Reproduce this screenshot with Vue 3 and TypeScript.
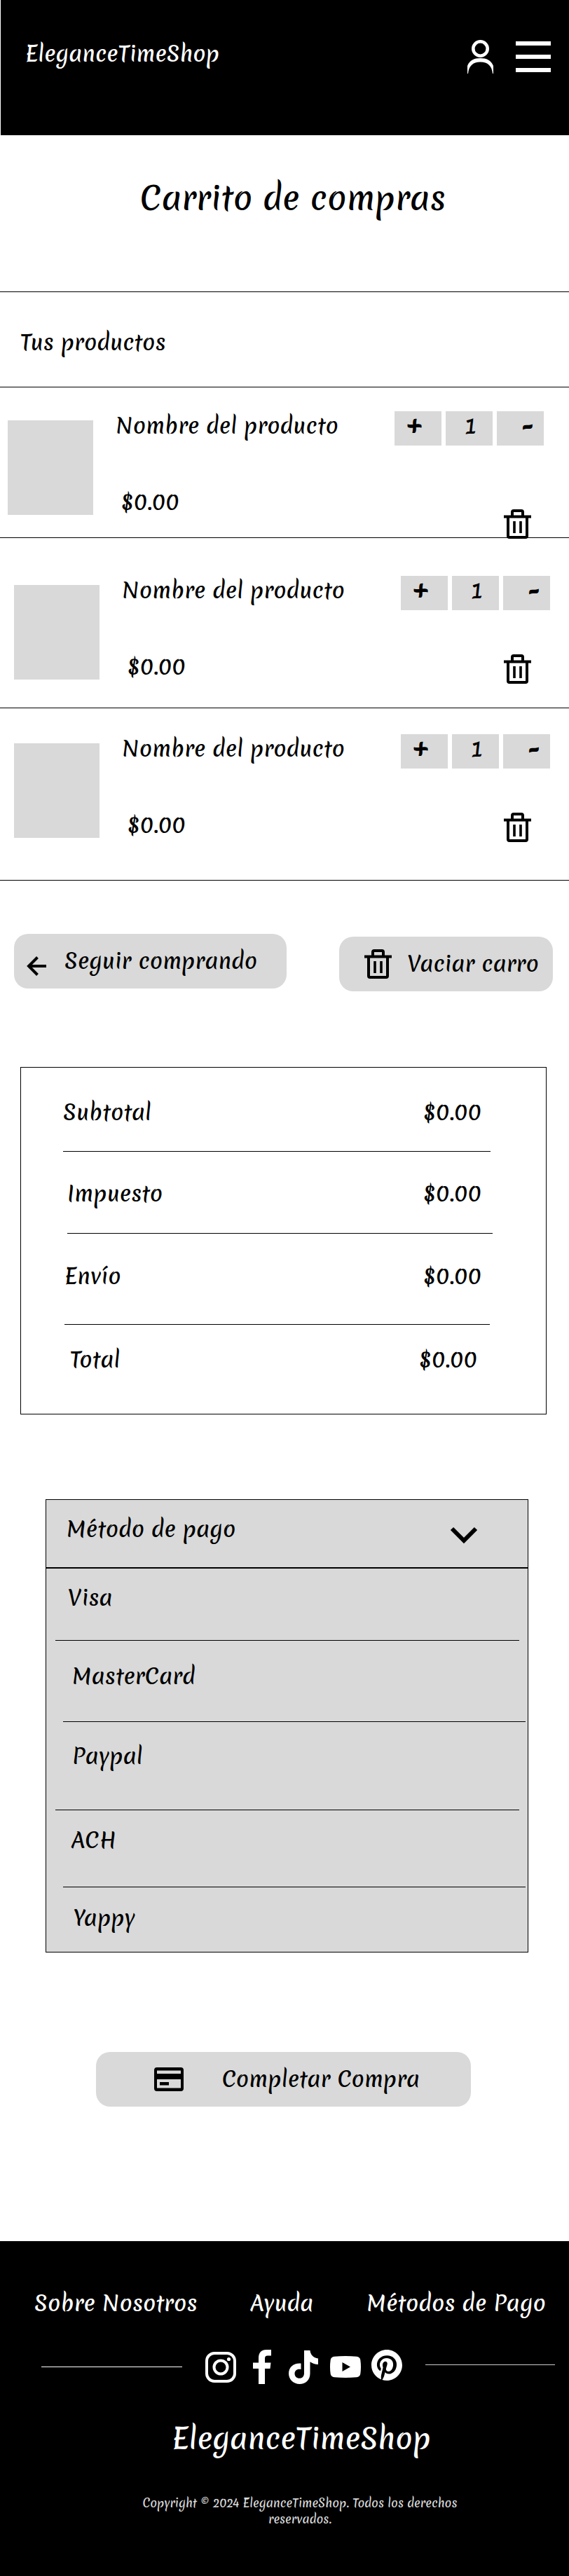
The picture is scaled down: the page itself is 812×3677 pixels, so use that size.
<script setup lang="ts">
import { ref } from 'vue'

interface Product {
  id: number
  name: string
  price: string
  quantity: number
}

interface Amount {
  key: string
  label: string
  value: string
}

const products = ref<Product[]>([
  { id: 1, name: 'Nombre del producto', price: '$0.00', quantity: 1 },
  { id: 2, name: 'Nombre del producto', price: '$0.00', quantity: 1 },
  { id: 3, name: 'Nombre del producto', price: '$0.00', quantity: 1 },
])

const amounts: Amount[] = [
  { key: 'subtotal', label: 'Subtotal', value: '$0.00' },
  { key: 'tax', label: 'Impuesto', value: '$0.00' },
  { key: 'shipping', label: 'Envío', value: '$0.00' },
  { key: 'total', label: 'Total', value: '$0.00' },
]

const methods: string[] = ['Visa', 'MasterCard', 'Paypal', 'ACH', 'Yappy']
const methodsOpen = ref(true)
const selectedMethod = ref('')

function changeQuantity(product: Product, step: number) {
  product.quantity = Math.max(1, product.quantity + step)
}

function removeProduct(id: number) {
  products.value = products.value.filter((p) => p.id !== id)
}

function emptyCart() {
  products.value = []
}
</script>

<template>
  <div class="page">
    <header class="top">
      <a class="brand" href="#">EleganceTimeShop</a>
      <nav class="top-actions" aria-label="Principal">
        <a href="#" aria-label="Mi cuenta">
          <svg width="37" height="48" viewBox="0 0 37 48">
            <circle cx="18.5" cy="12.5" r="10.2" fill="none" stroke="#fff" stroke-width="4.6" />
            <path fill="#fff" d="M0 48V37C3 29 10 26 18.500 26S34 29 37 37V48H36C35 37 29 31.500 18.500 31.500S2 37 1 48Z" />
          </svg>
        </a>
        <button type="button" aria-label="Menú">
          <svg width="50" height="45" viewBox="0 0 50 45" fill="#fff">
            <rect width="50" height="6" />
            <rect y="19" width="50" height="6" />
            <rect y="38" width="50" height="6" />
          </svg>
        </button>
      </nav>
    </header>

    <main>
      <h1>Carrito de compras</h1>

      <section class="cart">
        <h2>Tus productos</h2>
        <ul class="products">
          <li v-for="product in products" :key="product.id" class="product">
            <div class="thumb"></div>
            <div class="info">
              <p>{{ product.name }}</p>
              <p class="price">{{ product.price }}</p>
            </div>
            <div class="side">
              <div class="stepper">
                <button type="button" class="plus" aria-label="Añadir uno" @click="changeQuantity(product, 1)">+</button>
                <output>{{ product.quantity }}</output>
                <button type="button" class="minus" aria-label="Quitar uno" @click="changeQuantity(product, -1)">-</button>
              </div>
              <button type="button" class="remove" aria-label="Eliminar producto" @click="removeProduct(product.id)">
                <svg width="39" height="42" viewBox="0 0 39 42" fill="none" stroke="#000" stroke-width="4">
                  <path d="M12 10V4Q12 2 14 2H25Q27 2 27 4V10M0 10.500H39M6 11V38Q6 40 8 40H31Q33 40 33 38V11" />
                  <path d="M15 17V34M24 17V34" stroke-width="3.600" />
                </svg>
              </button>
            </div>
          </li>
        </ul>
      </section>

      <div class="cart-actions">
        <a class="pill back" href="#">
          <svg width="28" height="28" viewBox="0 0 28 28" fill="none" stroke="#000" stroke-width="4">
            <path d="M28 14H3M15.500 1.500L3 14L15.500 26.500" />
          </svg>
          <span>Seguir comprando</span>
        </a>
        <button type="button" class="pill clear" @click="emptyCart">
          <svg width="39" height="42" viewBox="0 0 39 42" fill="none" stroke="#000" stroke-width="4">
            <path d="M12 10V4Q12 2 14 2H25Q27 2 27 4V10M0 10.500H39M6 11V38Q6 40 8 40H31Q33 40 33 38V11" />
            <path d="M15 17V34M24 17V34" stroke-width="3.600" />
          </svg>
          <span>Vaciar carro</span>
        </button>
      </div>

      <dl class="summary">
        <div v-for="amount in amounts" :key="amount.key" class="amount" :class="amount.key">
          <dt>{{ amount.label }}</dt>
          <dd>{{ amount.value }}</dd>
        </div>
      </dl>

      <section class="payment">
        <button
          type="button"
          class="payment-head"
          aria-controls="payment-methods"
          :aria-expanded="methodsOpen"
          @click="methodsOpen = !methodsOpen"
        >
          <span>Método de pago</span>
          <svg width="40" height="26" viewBox="0 0 40 26" fill="none" stroke="#000" stroke-width="6">
            <path d="M3 3L20 20L37 3" />
          </svg>
        </button>
        <ul v-show="methodsOpen" id="payment-methods" class="methods">
          <li v-for="method in methods" :key="method" :class="method.toLowerCase()">
            <button type="button" :aria-pressed="selectedMethod === method" @click="selectedMethod = method">
              {{ method }}
            </button>
          </li>
        </ul>
      </section>

      <div class="checkout">
        <button type="button" class="pill pay">
          <svg width="42" height="34" viewBox="0 0 42 34">
            <path
              fill="#000"
              fill-rule="evenodd"
              d="M4 0H38Q42 0 42 4V30Q42 34 38 34H4Q0 34 0 30V4Q0 0 4 0ZM4 4.500V9H38V4.500ZM4 17V29.500H38V17ZM8 21H21V25.500H8Z"
            />
          </svg>
          <span>Completar Compra</span>
        </button>
      </div>
    </main>

    <footer class="bottom">
      <nav class="links" aria-label="Pie de página">
        <a href="#">Sobre Nosotros</a>
        <a href="#">Ayuda</a>
        <a href="#">Métodos de Pago</a>
      </nav>

      <div class="social">
        <span class="rule rule-left"></span>
        <a href="#" aria-label="Instagram">
          <svg width="44" height="44" viewBox="0 0 44 44" fill="none" stroke="#fff" stroke-width="4">
            <rect x="2" y="2" width="40" height="40" rx="11" />
            <circle cx="22" cy="22" r="9.500" />
            <circle cx="33.500" cy="10.500" r="2.600" fill="#fff" stroke="none" />
          </svg>
        </a>
        <a class="facebook" href="#" aria-label="Facebook">
          <svg width="26" height="49" viewBox="0 0 26 49" fill="#fff">
            <path d="M8 49V27H0V18.500H8V12C8 4 12 0 19 0H26V8.500H21C18 8.500 17 10 17 12.500V18.500H25.500L24.500 27H17V49Z" />
          </svg>
        </a>
        <a class="tiktok" href="#" aria-label="TikTok">
          <svg width="42" height="48" viewBox="0 0 42 48" fill="#fff">
            <path d="M22 0H30.500C31 6 35.500 11 42 11.500V20C37.500 20 34 18.500 30.500 16.200V33C30.500 42 24 48 15.500 48S0 41.500 0 33C0 23.500 7.500 17.500 17.500 18.500V27C12.500 25.800 8.500 28.500 8.500 33C8.500 37 11.500 39.800 15.300 39.800C19.500 39.800 22 37 22 32.500Z" />
          </svg>
        </a>
        <a class="youtube" href="#" aria-label="YouTube">
          <svg width="44" height="31" viewBox="0 0 44 31">
            <path fill="#fff" fill-rule="evenodd" d="M6 .8Q22-.8 38 .8Q42.500 1.200 43.300 5.500Q44.700 15.500 43.300 25.500Q42.500 29.800 38 30.200Q22 31.800 6 30.200Q1.500 29.800.7 25.500Q-.7 15.500.7 5.500Q1.500 1.200 6 .8ZM17.500 9V22L29 15.500Z" />
          </svg>
        </a>
        <a class="pinterest" href="#" aria-label="Pinterest">
          <svg width="44" height="44" viewBox="0 0 24 24" fill="#fff">
            <path d="M12 0C5.370 0 0 5.370 0 12c0 5.080 3.160 9.420 7.620 11.170-.1-.95-.2-2.400.04-3.440l1.410-5.970s-.36-.72-.36-1.780c0-1.670.97-2.910 2.170-2.910 1.020 0 1.520.77 1.520 1.690 0 1.030-.66 2.570-1 4-.28 1.190.6 2.170 1.780 2.170 2.130 0 3.770-2.250 3.770-5.500 0-2.870-2.060-4.880-5.010-4.880-3.410 0-5.420 2.560-5.420 5.210 0 1.030.4 2.140.9 2.740.1.120.11.230.08.350l-.33 1.360c-.05.220-.18.270-.41.160-1.500-.7-2.430-2.890-2.430-4.650 0-3.780 2.750-7.260 7.930-7.260 4.160 0 7.400 2.970 7.400 6.930 0 4.140-2.610 7.460-6.230 7.460-1.220 0-2.360-.63-2.750-1.380l-.75 2.850c-.27 1.040-1 2.350-1.490 3.150 1.120.34 2.310.53 3.550.53 6.630 0 12-5.370 12-12S18.630 0 12 0z" />
          </svg>
        </a>
        <span class="rule rule-right"></span>
      </div>

      <p class="footer-brand">EleganceTimeShop</p>
      <p class="copyright">Copyright © 2024 EleganceTimeShop. Todos los derechos reservados.</p>
    </footer>
  </div>
</template>

<style>
body {
  margin: 0;
  background: #fff;
}
</style>

<style scoped>
.page {
  color: #000;
  font-family: Merienda, 'Open Sans', 'Noto Sans', sans-serif;
  font-size: 30px;
  font-weight: 500;
  line-height: 40px;
}

h1,
h2,
p,
ul,
dl,
dd {
  margin: 0;
  padding: 0;
  font-weight: inherit;
}

ul {
  list-style: none;
}

a {
  color: inherit;
  text-decoration: none;
}

button {
  margin: 0;
  padding: 0;
  border: 0;
  background: none;
  color: inherit;
  font: inherit;
  text-align: left;
  cursor: pointer;
}

svg {
  display: block;
  flex: none;
}

.top {
  display: flex;
  align-items: flex-start;
  justify-content: space-between;
  padding: 57px 26px 88px 35px;
  border-left: 1px solid #fff;
  background: #000;
  color: #fff;
}

.top-actions {
  display: flex;
  align-items: center;
  gap: 32px;
}

h1 {
  padding: 60px 0 103px 24px;
  font-size: 45px;
  line-height: 60px;
  text-align: center;
}

.cart {
  border-top: 1px solid #000;
  border-bottom: 1px solid #000;
}

h2 {
  padding: 52px 29px 43px;
  font-size: 30px;
}

.product {
  display: flex;
  align-items: flex-start;
  padding: 37px 27px 54px 20px;
  border-top: 1px solid #000;
}

.product:nth-child(1) {
  padding: 34px 36px 0 11px;
}

.product:nth-child(2) {
  padding: 54px 27px 34px 20px;
}

.thumb {
  width: 122px;
  height: 135px;
  margin: 13px 32px 0 0;
  background: #d9d9d9;
}

.info {
  flex: 1;
  padding-top: 1px;
}

.price {
  padding: 69px 0 0 8px;
}

.side {
  display: flex;
  flex-direction: column;
  align-items: flex-end;
  gap: 63px;
}

.stepper {
  display: flex;
  gap: 6px;
}

.stepper > * {
  box-sizing: border-box;
  width: 67px;
  padding: 1px 0 8px 4px;
  background: #d9d9d9;
  text-align: center;
}

.stepper .plus,
.stepper .minus {
  font-size: 38px;
  font-weight: 700;
}

.stepper .plus {
  padding-right: 14px;
}

.stepper .minus {
  padding-right: 14px;
  text-align: right;
}

.remove {
  margin-right: 27px;
}

.product:nth-child(1) .side {
  gap: 91px;
}

.product:nth-child(1) .remove {
  margin: 0 18px -2px 0;
}

.cart-actions {
  display: flex;
  align-items: flex-start;
  justify-content: space-between;
  padding: 76px 23px 0 20px;
}

.pill {
  display: flex;
  align-items: center;
  padding: 19px 20px;
  border-radius: 20px;
  background: #d9d9d9;
  white-space: nowrap;
}

.pill svg {
  margin: -1px 0;
}

.back {
  gap: 26px;
  padding-right: 42px;
  padding-left: 18px;
}

.back svg {
  margin-top: 12px;
}

.clear {
  gap: 23px;
  margin-top: 4px;
  padding-left: 36px;
}

.summary {
  margin: 108px 32px 0 29px;
  border: 1px solid #000;
}

.amount {
  display: flex;
  justify-content: space-between;
}

.subtotal {
  margin: 0 79px 0 60px;
  padding: 44px 13px 35px 0;
  border-bottom: 1px solid #000;
}

.tax {
  margin: 0 76px 0 66px;
  padding: 40px 16px 36px 0;
  border-bottom: 1px solid #000;
}

.shipping {
  margin: 0 80px 0 62px;
  padding: 41px 12px 48px 0;
  border-bottom: 1px solid #000;
}

.total {
  margin: 0 80px 0 66px;
  padding: 30px 18px 57px 4px;
}

.payment {
  margin: 121px 58px 0 65px;
  border: 1px solid #000;
  background: #d9d9d9;
}

.payment-head {
  display: flex;
  align-items: flex-start;
  justify-content: space-between;
  width: 100%;
  padding: 22px 71px 34px 29px;
  border-bottom: 2px solid #000;
}

.payment-head svg {
  margin: 16px 0 -2px;
}

.methods button {
  display: block;
  width: 100%;
}

.visa {
  margin: 0 12px 0 13px;
  padding: 22px 0 40px 18px;
  border-bottom: 1px solid #000;
}

.mastercard {
  margin: 0 3px 0 24px;
  padding: 31px 0 44px 13px;
  border-bottom: 1px solid #000;
}

.paypal {
  margin: 0 12px 0 13px;
  padding: 29px 0 56px 24px;
  border-bottom: 1px solid #000;
}

.ach {
  margin: 0 3px 0 24px;
  padding: 23px 0 46px 12px;
  border-bottom: 1px solid #000;
}

.yappy {
  padding: 24px 0 28px 39px;
}

.checkout {
  display: flex;
  justify-content: center;
  padding: 142px 3px 192px 0;
}

.pay {
  gap: 55px;
  padding-right: 73px;
  padding-left: 83px;
}

.bottom {
  padding: 69px 0 70px;
  background: #000;
  color: #fff;
}

.links {
  display: flex;
  justify-content: space-between;
  padding: 0 33px 0 49px;
}

.social {
  display: flex;
  align-items: center;
  margin-top: 46px;
  padding: 0 20px 0 59px;
}

.rule {
  flex: none;
  width: 201px;
  height: 1px;
  background: #fff;
}

.rule-left {
  margin-right: 33px;
}

.rule-right {
  flex: 1;
  margin: 0 0 6px 33px;
  background: #ccc;
}

.facebook {
  margin: 0 25px 0 24px;
}

.youtube {
  margin: 0 15px 0 17px;
}

.pinterest {
  margin-bottom: 5px;
}

.footer-brand {
  margin-top: 53px;
  padding-left: 48px;
  font-size: 40px;
  line-height: 50px;
  text-align: center;
}

.copyright {
  max-width: 472px;
  margin: 55px auto 0;
  padding-left: 44px;
  color: #d9d9d9;
  font-size: 16px;
  line-height: 23px;
  text-align: center;
}
</style>
